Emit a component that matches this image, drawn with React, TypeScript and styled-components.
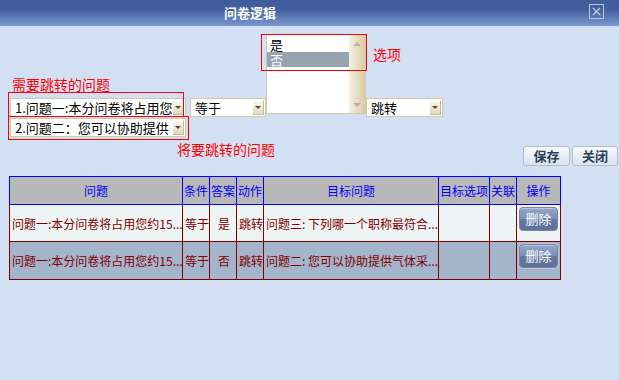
import React from "react";
import styled, { createGlobalStyle } from "styled-components";

const GlobalStyle = createGlobalStyle`
  html, body { margin: 0; padding: 0; background: #d3e0f4; }
  body { font-family: "Noto Sans CJK SC", "Noto Sans", sans-serif; }
  * { box-sizing: border-box; }
`;

const FONT = `"Noto Sans CJK SC", "Noto Sans", sans-serif`;

const Window = styled.div`
  width: 619px;
  height: 380px;
  background: #d3e0f4;
  overflow: hidden;
  font-family: ${FONT};
`;

const TitleBar = styled.div`
  height: 26px;
  display: flex;
  align-items: center;
  background: linear-gradient(to bottom, #3f5d9d 0%, #42609f 38%, #7c98d0 100%);
`;

const Title = styled.h1`
  margin: 0 0 0 224px;
  font-size: 13px;
  font-weight: bold;
  line-height: 16px;
  color: #ffffff;
`;

const CloseButton = styled.button`
  align-self: flex-start;
  margin: 4px 15px 0 auto;
  width: 15px;
  height: 15px;
  padding: 0;
  border: 1px solid #b9c5dd;
  background: transparent;
  display: flex;
  align-items: center;
  justify-content: center;
`;

const Content = styled.div`
  padding-top: 8px;
`;

const Controls = styled.div`
  padding-left: 10px;
`;

const ControlRow = styled.div`
  display: flex;
  align-items: flex-end;
`;

const LeftCol = styled.div`
  display: flex;
  flex-direction: column;
  align-items: flex-start;
`;

const Note = styled.span<{ $indent?: number; $below?: number }>`
  display: block;
  color: #ff0000;
  font-size: 14px;
  line-height: 16px;
  white-space: nowrap;
  margin-left: ${(p) => p.$indent ?? 0}px;
  margin-bottom: ${(p) => p.$below ?? 0}px;
`;

const Anchor = styled.div<{ $left?: number; $top?: number; $bottom?: number }>`
  position: relative;
  margin-left: ${(p) => p.$left ?? 0}px;
  margin-top: ${(p) => p.$top ?? 0}px;
  margin-bottom: ${(p) => p.$bottom ?? 0}px;
`;

const Outline = styled.span<{ $x: number; $y: number; $w: number; $h: number }>`
  position: absolute;
  left: ${(p) => p.$x}px;
  top: ${(p) => p.$y}px;
  width: ${(p) => p.$w}px;
  height: ${(p) => p.$h}px;
  border: 1px solid #ff0000;
  pointer-events: none;
  z-index: 2;
`;

const FloatNote = styled.span<{ $x: number; $y: number }>`
  position: absolute;
  left: ${(p) => p.$x}px;
  top: ${(p) => p.$y}px;
  color: #ff0000;
  font-size: 14px;
  line-height: 16px;
  white-space: nowrap;
`;

const Select = styled.div<{ $w: number }>`
  width: ${(p) => p.$w}px;
  height: 19px;
  border: 1px solid #d3c9a8;
  background: #ffffff;
  display: flex;
  align-items: center;
  padding-left: 4px;
  font-size: 13px;
  color: #000000;
`;

const SelectText = styled.span`
  flex: 1;
  min-width: 0;
  white-space: nowrap;
  overflow: hidden;
  line-height: 17px;
`;

const ArrowBtn = styled.span`
  flex: none;
  width: 12px;
  height: 15px;
  margin-right: 1px;
  border: 1px solid;
  border-color: #ffffff #c6b995 #c6b995 #ffffff;
  background: linear-gradient(#faf7ee, #e3d8b9);
  display: flex;
  align-items: center;
  justify-content: center;
  &::after {
    content: "";
    border-left: 3px solid transparent;
    border-right: 3px solid transparent;
    border-top: 3px solid #4a4a4a;
  }
`;

const ListBox = styled.div`
  width: 100px;
  height: 80px;
  border: 1px solid #d3c9a8;
  background: #ffffff;
  display: flex;
`;

const Options = styled.ul`
  flex: 1;
  margin: 0;
  padding: 2px 0 0;
  list-style: none;
`;

const Option = styled.li<{ $selected?: boolean }>`
  height: 15px;
  line-height: 15px;
  padding-left: 3px;
  font-size: 13px;
  background: ${(p) => (p.$selected ? "#98a3b0" : "transparent")};
  color: ${(p) => (p.$selected ? "#ffffff" : "#000000")};
`;

const ScrollBar = styled.div`
  width: 16px;
  background: linear-gradient(to right, #f5f1e4, #d9cba2);
  display: flex;
  flex-direction: column;
  justify-content: space-between;
  align-items: center;
  padding: 7px 0 6px;
`;

const ScrollArrow = styled.span<{ $down?: boolean }>`
  border-left: 4px solid transparent;
  border-right: 4px solid transparent;
  ${(p) =>
    p.$down
      ? "border-top: 4px solid #b4b2aa;"
      : "border-bottom: 4px solid #b4b2aa;"}
`;

const SecondRow = styled.div`
  margin-top: 1px;
`;

const ActionsRow = styled.div`
  display: flex;
  align-items: flex-start;
  padding: 4px 1px 0 10px;
`;

const ButtonGroup = styled.div`
  margin: 5px 0 0 auto;
  display: flex;
  gap: 2px;
`;

const ToolButton = styled.button<{ $w: number }>`
  width: ${(p) => p.$w}px;
  height: 20px;
  padding: 0;
  border: 1px solid #b0bdcf;
  border-radius: 3px;
  background: linear-gradient(#f8fafc, #dbe2ec);
  color: #2b3f5b;
  font-family: ${FONT};
  font-size: 13px;
  font-weight: bold;
  line-height: 18px;
`;

const Grid = styled.table`
  margin: 10px 0 0 9px;
  width: 551px;
  border-collapse: collapse;
  table-layout: fixed;
  font-size: 12px;
`;

const HeadCell = styled.th`
  height: 28px;
  padding: 0;
  background: #b8b8b8;
  color: #0000ff;
  border: 1px solid #0000ff;
  font-weight: normal;
  text-align: center;
  white-space: nowrap;
  overflow: hidden;
`;

const Row = styled.tr<{ $alt?: boolean }>`
  background: ${(p) => (p.$alt ? "#a4b5cb" : "#eef3f3")};
`;

const Cell = styled.td<{ $center?: boolean; $h: number }>`
  height: ${(p) => p.$h}px;
  padding: 0 0 0 2px;
  border: 1px solid #800000;
  color: #800000;
  white-space: nowrap;
  overflow: hidden;
  text-align: ${(p) => (p.$center ? "center" : "left")};
`;

const ActionCell = styled(Cell)`
  vertical-align: top;
  padding: 2px 0 0 0;
`;

const DeleteButton = styled.button`
  width: 39px;
  height: 24px;
  padding: 0;
  border: 1px solid #7a8499;
  border-radius: 4px;
  background: linear-gradient(#95a6c8, #7b90b9 48%, #64799f 52%, #5d719b);
  box-shadow: inset 0 1px 0 rgba(255, 255, 255, 0.35), 0 0 0 1px rgba(255, 255, 255, 0.25);
  color: #ffffff;
  font-family: ${FONT};
  font-size: 13px;
  line-height: 22px;
`;

type RuleRow = {
  question: string;
  cond: string;
  answer: string;
  action: string;
  target: string;
};

const rows: RuleRow[] = [
  {
    question: "问题一:本分问卷将占用您约15...",
    cond: "等于",
    answer: "是",
    action: "跳转",
    target: "问题三: 下列哪一个职称最符合...",
  },
  {
    question: "问题一:本分问卷将占用您约15...",
    cond: "等于",
    answer: "否",
    action: "跳转",
    target: "问题二: 您可以协助提供气体采...",
  },
];

const colWidths = [173, 27, 27, 27, 175, 51, 27, 44];

export default function App() {
  return (
    <Window>
      <GlobalStyle />
      <TitleBar>
        <Title>问卷逻辑</Title>
        <CloseButton aria-label="关闭">
          <svg width="9" height="9" viewBox="0 0 9 9">
            <path d="M1 1 L8 8 M8 1 L1 8" stroke="#c3cde0" strokeWidth="1.4" />
          </svg>
        </CloseButton>
      </TitleBar>
      <Content>
        <Controls>
          <ControlRow>
            <LeftCol>
              <Note $indent={2} $below={6}>需要跳转的问题</Note>
              <Anchor>
                <Outline $x={-2} $y={-6} $w={176} $h={25} />
                <Select $w={176}>
                  <SelectText>1.问题一:本分问卷将占用您</SelectText>
                  <ArrowBtn />
                </Select>
              </Anchor>
            </LeftCol>
            <Anchor $left={4}>
              <Select $w={76}>
                <SelectText>等于</SelectText>
                <ArrowBtn />
              </Select>
            </Anchor>
            <Anchor $bottom={3}>
              <ListBox>
                <Options>
                  <Option>是</Option>
                  <Option $selected>否</Option>
                </Options>
                <ScrollBar>
                  <ScrollArrow />
                  <ScrollArrow $down />
                </ScrollBar>
              </ListBox>
              <Outline $x={-5} $y={0} $w={106} $h={37} />
              <FloatNote $x={107} $y={12}>选项</FloatNote>
            </Anchor>
            <Anchor>
              <Select $w={77}>
                <SelectText>跳转</SelectText>
                <ArrowBtn />
              </Select>
            </Anchor>
          </ControlRow>
          <SecondRow>
            <Anchor>
              <Outline $x={-2} $y={-2} $w={181} $h={24} />
              <Select $w={176}>
                <SelectText>2.问题二：您可以协助提供</SelectText>
                <ArrowBtn />
              </Select>
            </Anchor>
          </SecondRow>
        </Controls>
        <ActionsRow>
          <Note $indent={167}>将要跳转的问题</Note>
          <ButtonGroup>
            <ToolButton $w={47}>保存</ToolButton>
            <ToolButton $w={46}>关闭</ToolButton>
          </ButtonGroup>
        </ActionsRow>
        <Grid>
          <colgroup>
            {colWidths.map((w, i) => (
              <col key={i} style={{ width: w }} />
            ))}
          </colgroup>
          <thead>
            <tr>
              <HeadCell>问题</HeadCell>
              <HeadCell>条件</HeadCell>
              <HeadCell>答案</HeadCell>
              <HeadCell>动作</HeadCell>
              <HeadCell>目标问题</HeadCell>
              <HeadCell>目标选项</HeadCell>
              <HeadCell>关联</HeadCell>
              <HeadCell>操作</HeadCell>
            </tr>
          </thead>
          <tbody>
            {rows.map((r, i) => (
              <Row key={i} $alt={i % 2 === 1}>
                <Cell $h={i === 0 ? 37 : 38}>{r.question}</Cell>
                <Cell $h={37}>{r.cond}</Cell>
                <Cell $h={37} $center>{r.answer}</Cell>
                <Cell $h={37}>{r.action}</Cell>
                <Cell $h={37}>{r.target}</Cell>
                <Cell $h={37}></Cell>
                <Cell $h={37}></Cell>
                <ActionCell $h={37} $center>
                  <DeleteButton>删除</DeleteButton>
                </ActionCell>
              </Row>
            ))}
          </tbody>
        </Grid>
      </Content>
    </Window>
  );
}
